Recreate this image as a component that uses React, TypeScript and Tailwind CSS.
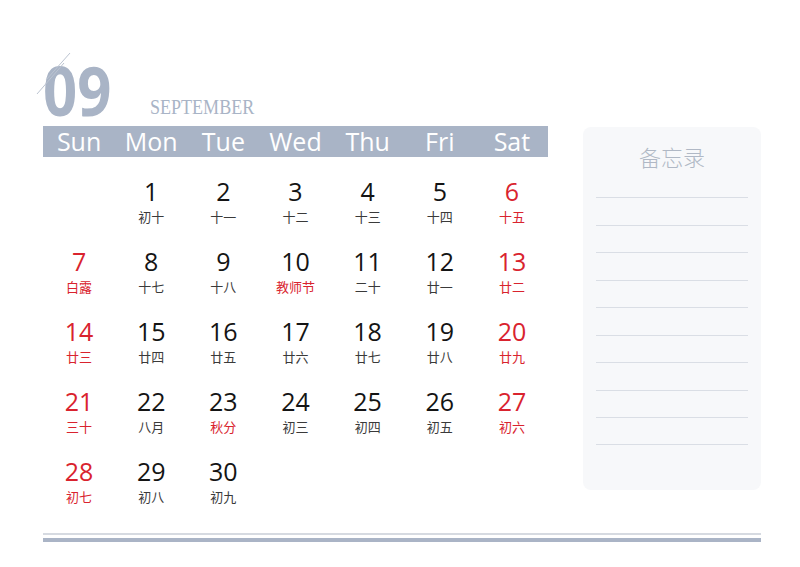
import React from "react";

type Cell = { d?: number; l?: string; red?: boolean; lred?: boolean };

const rows: Cell[][] = [
  [{}, { d: 1, l: "初十" }, { d: 2, l: "十一" }, { d: 3, l: "十二" }, { d: 4, l: "十三" }, { d: 5, l: "十四" }, { d: 6, l: "十五", red: true, lred: true }],
  [{ d: 7, l: "白露", red: true, lred: true }, { d: 8, l: "十七" }, { d: 9, l: "十八" }, { d: 10, l: "教师节", lred: true }, { d: 11, l: "二十" }, { d: 12, l: "廿一" }, { d: 13, l: "廿二", red: true, lred: true }],
  [{ d: 14, l: "廿三", red: true, lred: true }, { d: 15, l: "廿四" }, { d: 16, l: "廿五" }, { d: 17, l: "廿六" }, { d: 18, l: "廿七" }, { d: 19, l: "廿八" }, { d: 20, l: "廿九", red: true, lred: true }],
  [{ d: 21, l: "三十", red: true, lred: true }, { d: 22, l: "八月" }, { d: 23, l: "秋分", lred: true }, { d: 24, l: "初三" }, { d: 25, l: "初四" }, { d: 26, l: "初五" }, { d: 27, l: "初六", red: true, lred: true }],
  [{ d: 28, l: "初七", red: true, lred: true }, { d: 29, l: "初八" }, { d: 30, l: "初九" }, {}, {}, {}, {}],
];

const days = ["Sun", "Mon", "Tue", "Wed", "Thu", "Fri", "Sat"];

const lineClasses = [
  "mt-[30px]",
  "mt-[27px]",
  "mt-[26px]",
  "mt-[27px]",
  "mt-[26px]",
  "mt-[27px]",
  "mt-[26px]",
  "mt-[27px]",
  "mt-[26px]",
  "mt-[26px]",
];

export default function App() {
  return (
    <div
      className="w-[800px] h-[567px] bg-white overflow-hidden relative pl-[43px] pr-[39px]"
      style={{ fontFamily: "'Open Sans', 'Noto Sans CJK SC', sans-serif" }}
    >
      <div className="flex items-start">
        <div className="w-[505px] shrink-0">
          <div className="h-[126px] flex items-end">
            <div className="w-[107px] h-[64px] mb-[4px] shrink-0 flex items-center">
              <span className="block text-[68px] leading-[64px] font-bold text-[#a9b4c6] origin-left scale-x-[0.88] whitespace-nowrap">
                09
              </span>
            </div>
            <span
              className="block mb-[8px] text-[22px] leading-[22px] text-[#a9b4c6] origin-left scale-x-[0.82] whitespace-nowrap"
              style={{ fontFamily: "'Liberation Serif', serif" }}
            >
              SEPTEMBER
            </span>
          </div>
          <div className="grid grid-cols-7 h-[31px] bg-[#a9b4c6] text-white">
            {days.map((d) => (
              <div key={d} className="flex items-center justify-center text-[25px] leading-none">
                {d}
              </div>
            ))}
          </div>
          <div className="grid grid-cols-7">
            {rows.flat().map((c, i) => (
              <div key={i} className="h-[70px] flex flex-col items-center pt-[22px]">
                {c.d !== undefined && (
                  <>
                    <span className={`block text-[25px] leading-[25px] ${c.red ? "text-[#d9232e]" : "text-[#141414]"}`}>
                      {c.d}
                    </span>
                    <span
                      className={`block mt-[6px] text-[13px] leading-[13px] ${c.lred ? "text-[#d9232e]" : "text-[#3a3a3a]"}`}
                      style={{ fontFamily: "'Noto Sans CJK SC', sans-serif" }}
                    >
                      {c.l}
                    </span>
                  </>
                )}
              </div>
            ))}
          </div>
        </div>
        <div className="ml-[35px] mt-[127px] w-[178px] h-[363px] rounded-[8px] bg-[#f7f8fa] flex flex-col items-stretch px-[13px] pt-[18px]">
          <div
            className="text-center text-[22px] leading-[22px] font-light text-[#b0b8c5]"
            style={{ fontFamily: "'Noto Sans CJK SC', sans-serif" }}
          >
            备忘录
          </div>
          {lineClasses.map((m, i) => (
            <div key={i} className={`${m} h-[1px] bg-[#dadee5]`} />
          ))}
        </div>
      </div>
      <div className="mt-[26px] h-[2px] bg-[#d6dae1]" />
      <div className="mt-[3px] h-[4px] bg-[#aab4c6]" />
      <svg className="absolute left-0 top-0" width="100" height="100" viewBox="0 0 100 100">
        <line x1="70" y1="53" x2="46" y2="80" stroke="#bcc4d1" strokeWidth="1" />
        <line x1="64" y1="63" x2="37" y2="94" stroke="#bcc4d1" strokeWidth="1" />
      </svg>
    </div>
  );
}
